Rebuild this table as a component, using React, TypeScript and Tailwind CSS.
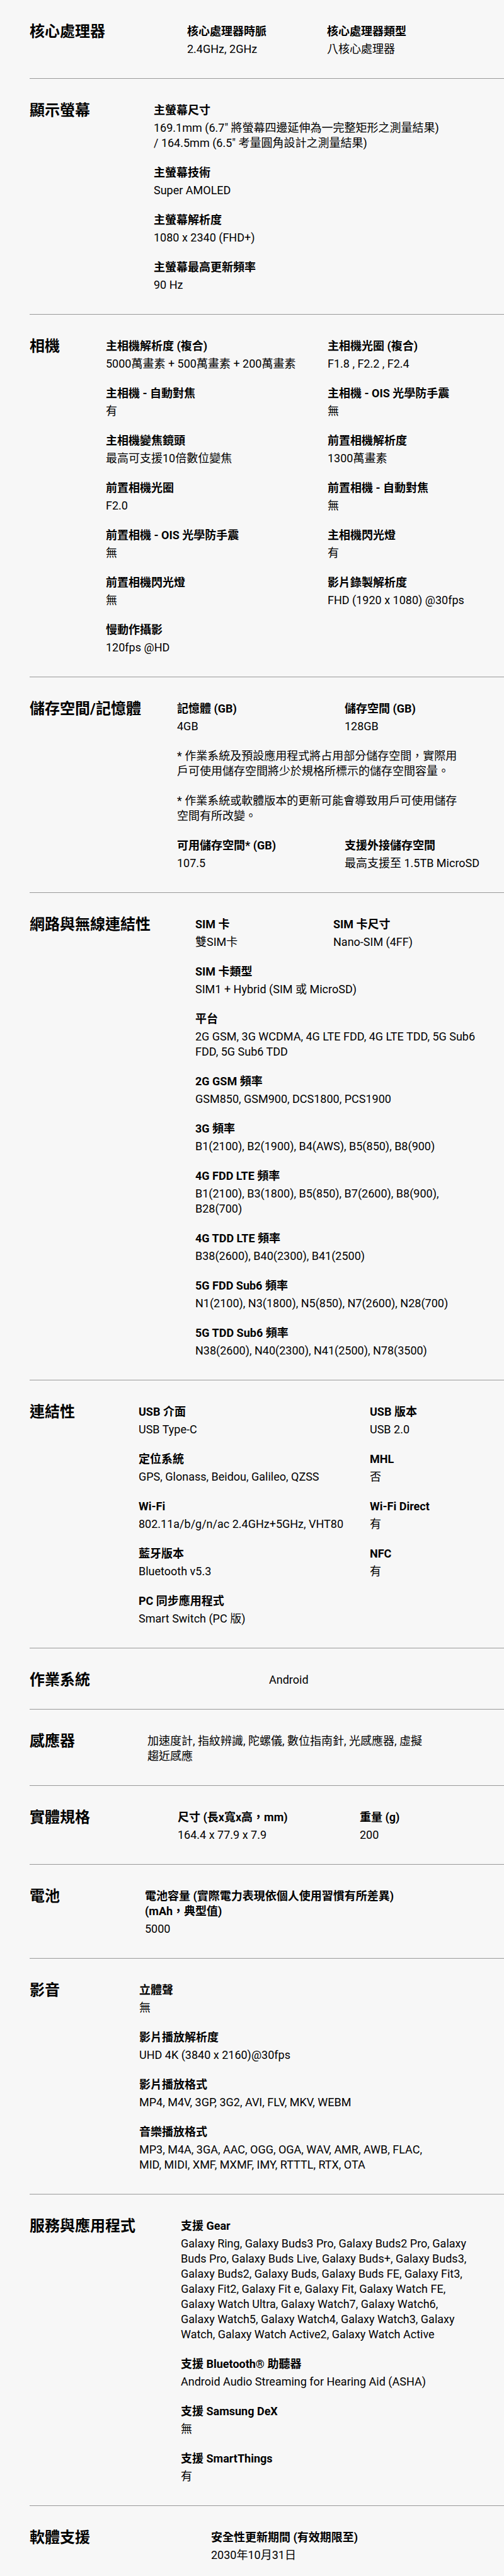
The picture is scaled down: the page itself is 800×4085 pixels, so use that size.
import React from "react"

type Spec = { label?: string; value: string; span?: boolean }

type Section = {
  title: string
  titleW: string
  grid: string
  items: Spec[]
}

// "\n" in a value marks where the original table wraps the line
const sections: Section[] = [
  {
    title: "核心處理器",
    titleW: "w-[250px]",
    grid: "grid-cols-[222px_auto]",
    items: [
      { label: "核心處理器時脈", value: "2.4GHz, 2GHz" },
      { label: "核心處理器類型", value: "八核心處理器" },
    ],
  },
  {
    title: "顯示螢幕",
    titleW: "w-[197px]",
    grid: "grid-cols-[480px]",
    items: [
      { label: "主螢幕尺寸", value: "169.1mm (6.7\" 將螢幕四邊延伸為一完整矩形之測量結果)\n/ 164.5mm (6.5\" 考量圓角設計之測量結果)" },
      { label: "主螢幕技術", value: "Super AMOLED" },
      { label: "主螢幕解析度", value: "1080 x 2340 (FHD+)" },
      { label: "主螢幕最高更新頻率", value: "90 Hz" },
    ],
  },
  {
    title: "相機",
    titleW: "w-[121px]",
    grid: "grid-cols-[352px_auto]",
    items: [
      { label: "主相機解析度 (複合)", value: "5000萬畫素 + 500萬畫素 + 200萬畫素" },
      { label: "主相機光圈 (複合)", value: "F1.8 , F2.2 , F2.4" },
      { label: "主相機 - 自動對焦", value: "有" },
      { label: "主相機 - OIS 光學防手震", value: "無" },
      { label: "主相機變焦鏡頭", value: "最高可支援10倍數位變焦" },
      { label: "前置相機解析度", value: "1300萬畫素" },
      { label: "前置相機光圈", value: "F2.0" },
      { label: "前置相機 - 自動對焦", value: "無" },
      { label: "前置相機 - OIS 光學防手震", value: "無" },
      { label: "主相機閃光燈", value: "有" },
      { label: "前置相機閃光燈", value: "無" },
      { label: "影片錄製解析度", value: "FHD (1920 x 1080) @30fps" },
      { label: "慢動作攝影", value: "120fps @HD" },
    ],
  },
  {
    title: "儲存空間/記憶體",
    titleW: "w-[234px]",
    grid: "grid-cols-[266px_auto]",
    items: [
      { label: "記憶體 (GB)", value: "4GB" },
      { label: "儲存空間 (GB)", value: "128GB" },
      { value: "* 作業系統及預設應用程式將占用部分儲存空間，實際用\n戶可使用儲存空間將少於規格所標示的儲存空間容量。", span: true },
      { value: "* 作業系統或軟體版本的更新可能會導致用戶可使用儲存\n空間有所改變。", span: true },
      { label: "可用儲存空間* (GB)", value: "107.5" },
      { label: "支援外接儲存空間", value: "最高支援至 1.5TB MicroSD" },
    ],
  },
  {
    title: "網路與無線連結性",
    titleW: "w-[263px]",
    grid: "grid-cols-[219px_261px]",
    items: [
      { label: "SIM 卡", value: "雙SIM卡" },
      { label: "SIM 卡尺寸", value: "Nano-SIM (4FF)" },
      { label: "SIM 卡類型", value: "SIM1 + Hybrid (SIM 或 MicroSD)", span: true },
      { label: "平台", value: "2G GSM, 3G WCDMA, 4G LTE FDD, 4G LTE TDD, 5G Sub6\nFDD, 5G Sub6 TDD", span: true },
      { label: "2G GSM 頻率", value: "GSM850, GSM900, DCS1800, PCS1900", span: true },
      { label: "3G 頻率", value: "B1(2100), B2(1900), B4(AWS), B5(850), B8(900)", span: true },
      { label: "4G FDD LTE 頻率", value: "B1(2100), B3(1800), B5(850), B7(2600), B8(900),\nB28(700)", span: true },
      { label: "4G TDD LTE 頻率", value: "B38(2600), B40(2300), B41(2500)", span: true },
      { label: "5G FDD Sub6 頻率", value: "N1(2100), N3(1800), N5(850), N7(2600), N28(700)", span: true },
      { label: "5G TDD Sub6 頻率", value: "N38(2600), N40(2300), N41(2500), N78(3500)", span: true },
    ],
  },
  {
    title: "連結性",
    titleW: "w-[173px]",
    grid: "grid-cols-[367px_auto]",
    items: [
      { label: "USB 介面", value: "USB Type-C" },
      { label: "USB 版本", value: "USB 2.0" },
      { label: "定位系統", value: "GPS, Glonass, Beidou, Galileo, QZSS" },
      { label: "MHL", value: "否" },
      { label: "Wi-Fi", value: "802.11a/b/g/n/ac 2.4GHz+5GHz, VHT80" },
      { label: "Wi-Fi Direct", value: "有" },
      { label: "藍牙版本", value: "Bluetooth v5.3" },
      { label: "NFC", value: "有" },
      { label: "PC 同步應用程式", value: "Smart Switch (PC 版)" },
    ],
  },
  {
    title: "作業系統",
    titleW: "w-[380px]",
    grid: "grid-cols-[auto]",
    items: [{ value: "Android" }],
  },
  {
    title: "感應器",
    titleW: "w-[187px]",
    grid: "grid-cols-[480px]",
    items: [{ value: "加速度計, 指紋辨識, 陀螺儀, 數位指南針, 光感應器, 虛擬\n趨近感應" }],
  },
  {
    title: "實體規格",
    titleW: "w-[235px]",
    grid: "grid-cols-[289px_auto]",
    items: [
      { label: "尺寸 (長x寬x高，mm)", value: "164.4 x 77.9 x 7.9" },
      { label: "重量 (g)", value: "200" },
    ],
  },
  {
    title: "電池",
    titleW: "w-[183px]",
    grid: "grid-cols-[450px]",
    items: [{ label: "電池容量 (實際電力表現依個人使用習慣有所差異) (mAh，典型值)", value: "5000" }],
  },
  {
    title: "影音",
    titleW: "w-[174px]",
    grid: "grid-cols-[480px]",
    items: [
      { label: "立體聲", value: "無" },
      { label: "影片播放解析度", value: "UHD 4K (3840 x 2160)@30fps" },
      { label: "影片播放格式", value: "MP4, M4V, 3GP, 3G2, AVI, FLV, MKV, WEBM" },
      { label: "音樂播放格式", value: "MP3, M4A, 3GA, AAC, OGG, OGA, WAV, AMR, AWB, FLAC,\nMID, MIDI, XMF, MXMF, IMY, RTTTL, RTX, OTA" },
    ],
  },
  {
    title: "服務與應用程式",
    titleW: "w-[240px]",
    grid: "grid-cols-[480px]",
    items: [
      {
        label: "支援 Gear",
        value:
          "Galaxy Ring, Galaxy Buds3 Pro, Galaxy Buds2 Pro, Galaxy\nBuds Pro, Galaxy Buds Live, Galaxy Buds+, Galaxy Buds3,\nGalaxy Buds2, Galaxy Buds, Galaxy Buds FE, Galaxy Fit3,\nGalaxy Fit2, Galaxy Fit e, Galaxy Fit, Galaxy Watch FE,\nGalaxy Watch Ultra, Galaxy Watch7, Galaxy Watch6,\nGalaxy Watch5, Galaxy Watch4, Galaxy Watch3, Galaxy\nWatch, Galaxy Watch Active2, Galaxy Watch Active",
      },
      { label: "支援 Bluetooth® 助聽器", value: "Android Audio Streaming for Hearing Aid (ASHA)" },
      { label: "支援 Samsung DeX", value: "無" },
      { label: "支援 SmartThings", value: "有" },
    ],
  },
  {
    title: "軟體支援",
    titleW: "w-[288px]",
    grid: "grid-cols-[auto]",
    items: [{ label: "安全性更新期間 (有效期限至)", value: "2030年10月31日" }],
  },
]

function SpecItem({ label, value, span }: Spec) {
  return (
    <div className={span ? "col-span-2" : ""}>
      {label && <p className="text-[18px] leading-6 font-bold">{label}</p>}
      <p className={`text-[18px] leading-6 whitespace-pre-line ${label ? "mt-1" : ""}`}>{value}</p>
    </div>
  )
}

export default function App() {
  return (
    <div className="min-h-[4085px] bg-[#f7f7f7] pl-[47px] text-black font-['Roboto','Noto_Sans_CJK_TC',sans-serif]">
      {sections.map((s, i) => (
        <section
          key={s.title}
          className={`flex pt-[38px] pb-[34px] ${i < sections.length - 1 ? "border-b border-[#999999]" : ""}`}
        >
          <h2 className={`${s.titleW} shrink-0 text-[24px] leading-6 font-bold`}>{s.title}</h2>
          <div className={`grid ${s.grid} gap-y-[23px]`}>
            {s.items.map((item, j) => (
              <SpecItem key={j} {...item} />
            ))}
          </div>
        </section>
      ))}
    </div>
  )
}
